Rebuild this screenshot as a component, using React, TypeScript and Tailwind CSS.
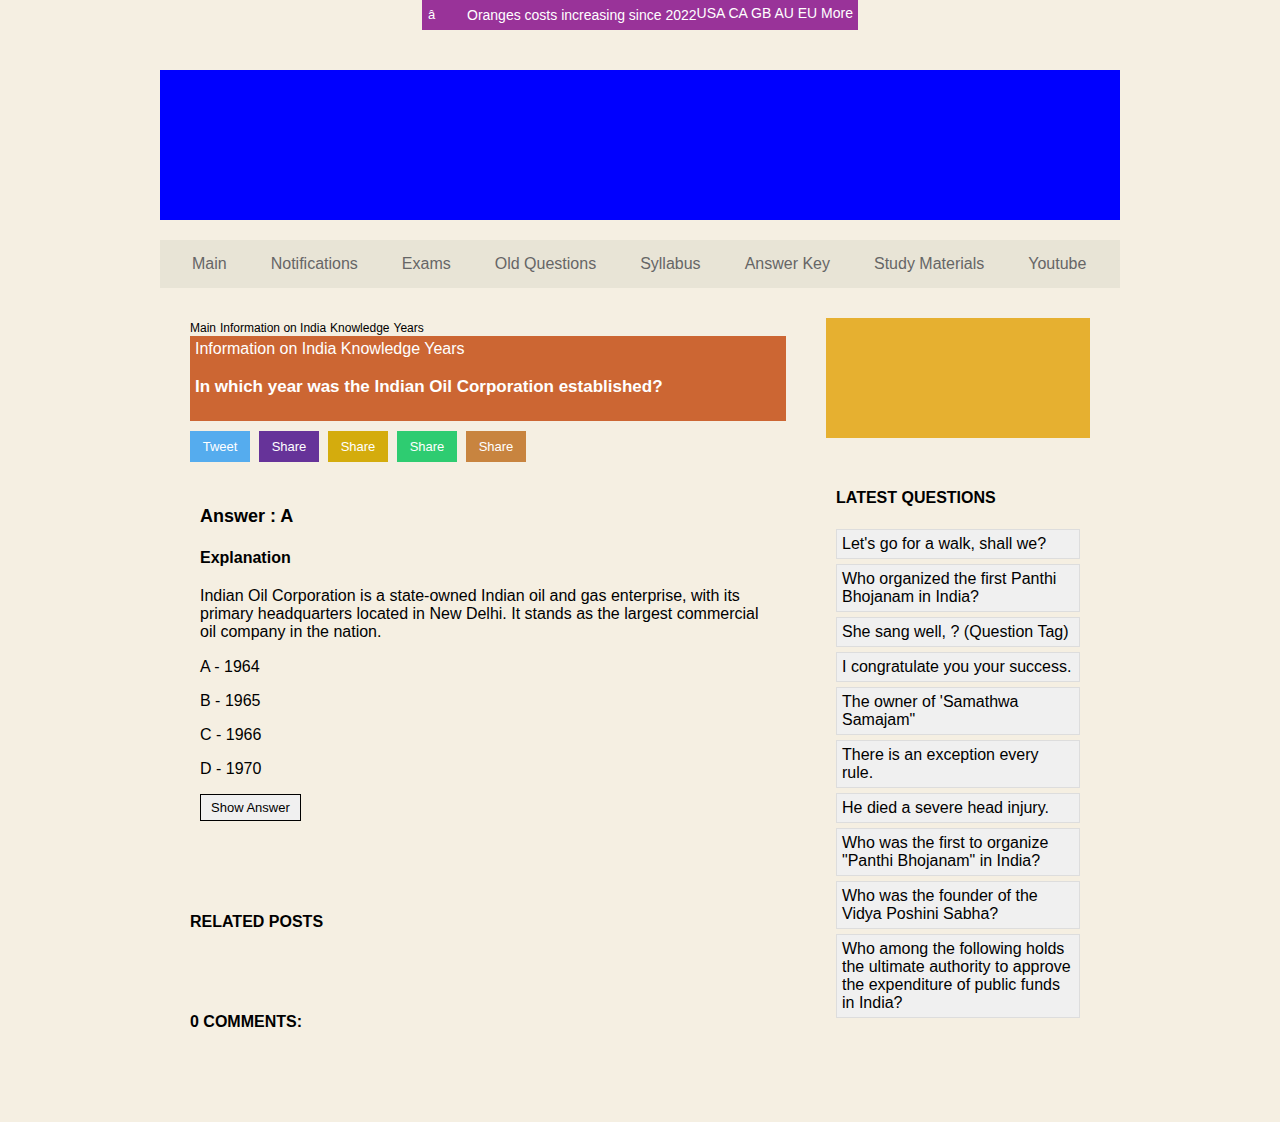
const navItems = ["Main", "Notifications", "Exams", "Old Questions", "Syllabus", "Answer Key", "Study Materials", "Youtube"];

const shareButtons = [
  { label: "Tweet", color: "bg-[#55acee]" },
  { label: "Share", color: "bg-[#663399]" },
  { label: "Share", color: "bg-[#d4ac0d]" },
  { label: "Share", color: "bg-[#2ecc71]" },
  { label: "Share", color: "bg-[#c8843f]" },
];

const options = ["A - 1964", "B - 1965", "C - 1966", "D - 1970"];

const latest = [
  "Let's go for a walk, shall we?",
  "Who organized the first Panthi Bhojanam in India?",
  "She sang well, ? (Question Tag)",
  "I congratulate you your success.",
  "The owner of 'Samathwa Samajam\"",
  "There is an exception every rule.",
  "He died a severe head injury.",
  "Who was the first to organize \"Panthi Bhojanam\" in India?",
  "Who was the founder of the Vidya Poshini Sabha?",
  "Who among the following holds the ultimate authority to approve the expenditure of public funds in India?",
];

export default function App() {
  return (
    <div className="min-h-[1122px] bg-[#f5efe2] font-['Liberation_Sans',Arial,sans-serif] text-black">
      <div className="flex justify-center">
        <div className="w-[436px] h-[30px] bg-[#993399] text-white text-[14px] flex items-center pl-[6px]">
          <span className="w-[39px] text-[13px]">â</span>
          <span>Oranges costs increasing since 2022</span>
          <span className="-mt-[4px]">USA CA GB AU EU More</span>
        </div>
      </div>

      <div className="w-[960px] mx-auto">
        <div className="mt-[40px] h-[150px] bg-[#0000ff]" />

        <nav className="mt-[20px] h-[48px] bg-[#e8e4d6] flex items-center pl-[10px]">
          {navItems.map((n) => (
            <a key={n} className="px-[22px] text-[16px] text-[#666666]">{n}</a>
          ))}
        </nav>

        <div className="flex px-[30px] pt-[30px] gap-[40px]">
          <div className="w-[596px]">
            <div className="mt-[2px] flex gap-[4px] text-[12px] leading-[16px]">
              <span>Main</span>
              <span>Information on India</span>
              <span>Knowledge</span>
              <span>Years</span>
            </div>
            <div className="h-[85px] bg-[#cc6633] text-white px-[5px] pt-[4px]">
              <div className="text-[16px] leading-[18px]">Information on India Knowledge Years</div>
              <h1 className="mt-[19px] text-[17px] font-bold leading-[20px]">In which year was the Indian Oil Corporation established?</h1>
            </div>
            <div className="mt-[10px] flex gap-[9px]">
              {shareButtons.map((b, i) => (
                <button key={i} className={`${b.color} w-[60px] h-[31px] text-white text-[13px]`}>{b.label}</button>
              ))}
            </div>

            <div className="px-[10px] pt-[44px]">
              <h2 className="text-[18px] font-bold leading-[20px]">Answer : A</h2>
              <h3 className="mt-[23px] text-[16px] font-bold leading-[18px]">Explanation</h3>
              <p className="mt-[20px] text-[16px] leading-[18px]">
                Indian Oil Corporation is a state-owned Indian oil and gas enterprise, with its primary headquarters located in New Delhi. It stands as the largest commercial oil company in the nation.
              </p>
              <div className="mt-[17px] flex flex-col gap-[16px] text-[16px] leading-[18px]">
                {options.map((o) => <div key={o}>{o}</div>)}
              </div>
              <button className="mt-[16px] h-[27px] px-[10px] border border-black bg-[#f0f0f0] text-[13px]">Show Answer</button>
            </div>

            <h3 className="mt-[92px] text-[16px] font-bold leading-[18px]">RELATED POSTS</h3>
            <h3 className="mt-[82px] text-[16px] font-bold leading-[18px]">0 COMMENTS:</h3>
          </div>

          <aside className="w-[264px]">
            <div className="h-[120px] bg-[#e6b030]" />
            <div className="px-[10px] pt-[51px]">
              <h3 className="text-[16px] font-bold leading-[18px]">LATEST QUESTIONS</h3>
              <ul className="mt-[22px] flex flex-col gap-[5px]">
                {latest.map((q) => (
                  <li key={q} className="w-[244px] bg-[#f0f0f0] border border-[#dddddd] px-[5px] py-[5px] text-[16px] leading-[18px]">{q}</li>
                ))}
              </ul>
            </div>
          </aside>
        </div>
      </div>
    </div>
  );
}
